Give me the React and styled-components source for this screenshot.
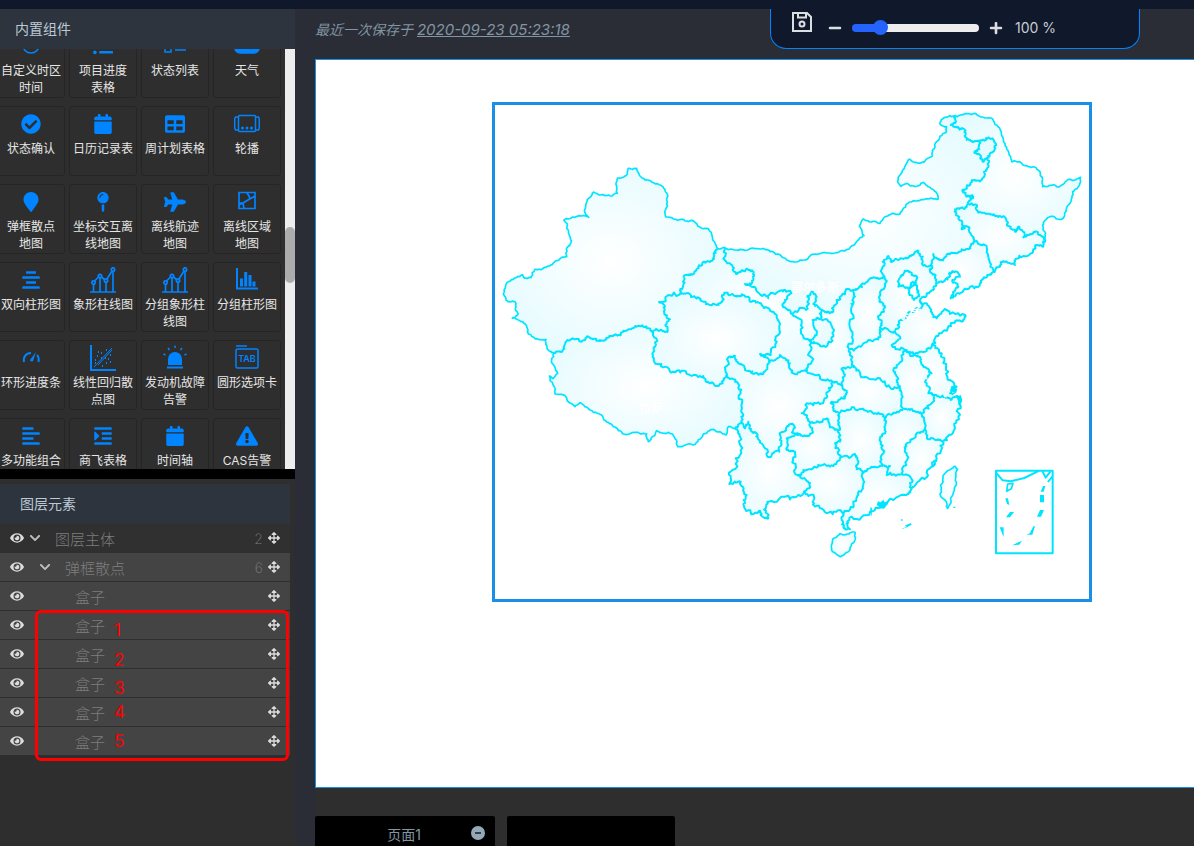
import { useState } from "react";
import styled, { createGlobalStyle, css } from "styled-components";
import {
  FaAlignCenter,
  FaAlignLeft,
  FaArrowsAlt,
  FaCalendar,
  FaCheckCircle,
  FaChevronDown,
  FaExclamationTriangle,
  FaEye,
  FaIndent,
  FaListUl,
  FaMapMarker,
  FaMapPin,
  FaMinus,
  FaPlane,
  FaPlus,
  FaTable,
} from "react-icons/fa";

const GlobalStyle = createGlobalStyle`
  * {
    box-sizing: border-box;
  }
  body {
    margin: 0;
    background: #2a2d35;
    color: #e6e6e6;
    font-family: Inter, "Noto Sans CJK SC", sans-serif;
    font-size: 14px;
  }
  button {
    padding: 0;
    border: none;
    background: none;
    color: inherit;
    font: inherit;
    cursor: pointer;
  }
`;

const Page = styled.div`
  display: flex;
  flex-direction: column;
  height: 100vh;
  overflow: hidden;
`;

const TopStrip = styled.div`
  flex: none;
  height: 9px;
  background: #10182c;
`;

const Body = styled.div`
  display: flex;
  flex: 1;
  min-height: 0;
`;

/* sidebar */

const Sidebar = styled.aside`
  display: flex;
  flex-direction: column;
  flex: none;
  width: 295px;
  background: #2e2e2e;
`;

const PanelTitle = styled.h2`
  flex: none;
  margin: 0;
  padding-left: ${(p) => p.$indent}px;
  height: 40px;
  line-height: 40px;
  background: #2d343e;
  color: #bcc9d4;
  font-size: 14px;
  font-weight: 400;
`;

const ComponentList = styled.div`
  display: flex;
  flex: none;
  justify-content: space-between;
  height: 420px;
  overflow: hidden;
`;

const TileGrid = styled.div`
  display: grid;
  grid-template-columns: repeat(4, 68px);
  grid-auto-rows: 70px;
  gap: 8px 4px;
  margin: -21px 0 0 -3px;
`;

const Tile = styled.button`
  display: flex;
  flex-direction: column;
  align-items: center;
  padding-top: 5px;
  border: 1px solid #252525;
  border-radius: 3px;
  font-size: 12px;
  line-height: 17px;
  white-space: pre-line;
`;

const TileIcon = styled.span`
  display: flex;
  flex: none;
  align-items: center;
  justify-content: center;
  height: 24px;
  margin-bottom: 4px;
  color: #0084ff;
  font-size: ${(p) => p.$size}px;
`;

const ScrollTrack = styled.div`
  flex: none;
  width: 10px;
  padding-top: 178px;
  background: #ededed;
`;

const ScrollThumb = styled.div`
  height: 56px;
  border-radius: 5px;
  background: #acacac;
`;

const Splitter = styled.div`
  flex: none;
  height: 10px;
  background: #000;
`;

const LayerPanel = styled.section`
  position: relative;
  flex: 1;
  padding: 5px 5px 0 0;
`;

const LayerRow = styled.div`
  display: flex;
  align-items: center;
  height: 29px;
  padding: 0 10px;
  border-bottom: 1px solid #2f2f2f;
  background: ${(p) => (p.$depth === 0 ? "#303030" : "#444")};
  color: #7d7d7d;
  font-size: 15px;
  font-weight: 200;
`;

const RowButton = styled.button`
  display: flex;
  flex: none;
  color: #dcdcdc;
  font-size: ${(p) => p.$size}px;
`;

const Toggle = styled.span`
  display: flex;
  flex: none;
  justify-content: flex-end;
  width: ${(p) => 17 + p.$depth * 10}px;
  color: #bdbdbd;
  font-size: 12px;
`;

const LayerName = styled.span`
  flex: 1;
  margin-left: 14px;
`;

const LayerCount = styled.span`
  margin-right: 5px;
  font-size: 14px;
`;

/* red note drawn over the rows */

const Annotation = styled.div`
  position: absolute;
  left: 35px;
  top: 131px;
  width: 254px;
  height: 151px;
  border: 3px solid #f00;
  border-radius: 6px;
  pointer-events: none;
`;

const AnnotationNumber = styled.span`
  position: absolute;
  left: 76px;
  top: ${(p) => p.$top}px;
  color: #f00;
  font-size: 17px;
  line-height: 20px;
`;

/* work area */

const Main = styled.main`
  display: flex;
  flex: 1;
  flex-direction: column;
  min-width: 0;
  padding-left: 20px;
`;

const Toolbar = styled.div`
  display: flex;
  flex: none;
  justify-content: space-between;
  height: 50px;
  padding-right: 54px;
`;

const SavedAt = styled.span`
  color: #8195a3;
  font-style: italic;
  line-height: 42px;
`;

const SavedTime = styled.u`
  font-size: 15px;
`;

const ZoomPanel = styled.div`
  display: flex;
  align-items: center;
  width: 370px;
  height: 40px;
  padding: 0 20px 2px;
  border: 1px solid #0084ff;
  border-top: none;
  border-radius: 0 0 16px 16px;
  background: #10182c;
`;

const ToolButton = styled.button`
  display: flex;
  color: #dcdfe0;
  font-size: 14px;
`;

const SaveButton = styled(ToolButton)`
  align-self: flex-start;
  margin: 2px 15px 0 0;
`;

const track = css`
  height: 8px;
  border-radius: 4px;
  background: linear-gradient(to right, #2563ff 24%, #ededed 24%);
`;

const thumb = css`
  width: 15px;
  height: 15px;
  border: none;
  border-radius: 50%;
  background: #2563ff;
`;

const ZoomSlider = styled.input`
  appearance: none;
  width: 127px;
  height: 16px;
  margin: 0 10px;
  background: none;
  &::-webkit-slider-runnable-track {
    ${track}
  }
  &::-webkit-slider-thumb {
    appearance: none;
    margin-top: -4px;
    ${thumb}
  }
  &::-moz-range-track {
    ${track}
  }
  &::-moz-range-thumb {
    ${thumb}
  }
`;

const ZoomValue = styled.span`
  margin-left: 12px;
  color: #c8ccd0;
`;

const Canvas = styled.div`
  position: relative;
  flex: 1;
  border: 1px solid #1890e8;
  border-right: none;
  background: #fff;
  overflow: hidden;
`;

const SelectedWidget = styled.div`
  position: absolute;
  left: 176px;
  top: 42px;
  width: 600px;
  height: 500px;
  border: 3px solid #1890e8;
  svg {
    display: block;
    width: 100%;
    height: 100%;
  }
`;

const PageTabs = styled.div`
  display: flex;
  flex: none;
  gap: 12px;
  height: 58px;
  padding-top: 28px;
  background: #2e2e2e;
`;

const PageTab = styled.div`
  display: flex;
  align-items: center;
  justify-content: flex-end;
  width: ${(p) => (p.$empty ? 168 : 180)}px;
  padding: 4px 10px 0 0;
  border-radius: 2px 2px 0 0;
  background: #000;
  color: #8195a3;
`;

const TabName = styled.span`
  flex: 1;
  padding: 4px 0 0 22px;
  text-align: center;
  line-height: 26px;
`;

/* icons that the icon font does not have */

const Line = ({ size = 26, children, ...rest }) => (
  <svg
    width={size}
    height={size}
    viewBox="0 0 26 26"
    fill="none"
    stroke="currentColor"
    strokeWidth="1.5"
    {...rest}
  >
    {children}
  </svg>
);

const ClockIcon = () => (
  <Line>
    <circle cx="13" cy="12" r="8" />
    <path d="M13 7v5l4 2" />
  </Line>
);

const StatusListIcon = () => (
  <Line>
    <path d="M3 5h6v5H3zM3 14h6v5H3zM13 7h11M13 17h11" />
  </Line>
);

const WeatherIcon = () => (
  <Line>
    <rect x="1" y="5" width="24" height="15" rx="5" fill="currentColor" />
  </Line>
);

const CarouselIcon = () => (
  <Line>
    <rect x="4.5" y="4.5" width="17" height="16" rx="1" />
    <path d="M4 6H1.500L.7 8v9l.8 2H4M22 6h2.500l.8 2v9l-.8 2H22" />
    <g fill="currentColor" stroke="none">
      <circle cx="8.500" cy="17" r="1.500" />
      <circle cx="13" cy="17" r="1.500" />
      <circle cx="17.500" cy="17" r="1.500" />
    </g>
  </Line>
);

const AreaIcon = () => (
  <Line strokeWidth="1.7">
    <path d="M5 3.500h16v16H5zM5 16l4-2 5-3 7-4M13 4l2 3 1 3M9 14l1 5.500M5 14h4" />
  </Line>
);

const BarLineIcon = () => (
  <Line strokeWidth="1.7">
    <path d="M0 25h26M3.500 25V17M10 25V11M16 25V15M23 25V4M4 14.500l5-5M11 9.500l4 3.500M17 12l5-8" />
    <g fill="#2e2e2e">
      <circle cx="3.500" cy="15.500" r="1.700" />
      <circle cx="10" cy="9" r="1.700" />
      <circle cx="16" cy="13.500" r="1.700" />
      <circle cx="23" cy="2.500" r="1.700" />
    </g>
  </Line>
);

const BarsIcon = () => (
  <Line>
    <path d="M3 1v20.500h21" strokeWidth="2" />
    <path d="M7.500 19.500v-8M11.700 19.500V5M16 19.500V8M20 19.500v-5" strokeWidth="3" />
  </Line>
);

const GaugeIcon = () => (
  <Line>
    <path d="M6 17c-1-5 2-9 7-9M19 10c2 2 2 4 1.500 7" strokeWidth="2" />
    <path d="M18 7l-3 9a2 2 0 0 1-3-1z" fill="currentColor" stroke="none" />
  </Line>
);

const ScatterIcon = () => (
  <Line>
    <path d="M1 0v25h25" strokeWidth="2" />
    <path d="M4 22L22 3M8 20L22 5" strokeWidth="1" />
    <path
      d="M5 15h1M7 11h1M11 8h1M16 5h1M8 7h1M5 18h1M11 13h1M12 21h1M16 18h1M18 14h1M20 10h1M15 13h1M20 17h1"
      strokeWidth="2"
    />
  </Line>
);

const AlarmIcon = () => (
  <Line>
    <path
      d="M6 20v-6a7 7 0 0 1 14 0v6zM5 21.500h16v2H5z"
      fill="currentColor"
      stroke="none"
    />
    <path d="M13 .5V3M6 3l1.500 2M20 3l-1.500 2M1.500 9l2 1M24.500 9l-2 1" />
  </Line>
);

const TabIcon = () => (
  <Line>
    <path d="M2 1h11" />
    <rect x="2" y="4" width="22" height="19" rx="1.500" />
    <text
      x="13"
      y="17"
      fill="currentColor"
      stroke="none"
      fontSize="9"
      fontWeight="600"
      textAnchor="middle"
    >
      TAB
    </text>
  </Line>
);

const SaveIcon = () => (
  <Line size={22} viewBox="0 0 22 22" strokeWidth="2">
    <path d="M2 2h14l4 4v14H2zM7 2v4.500h8V2" />
    <circle cx="11" cy="13" r="2.500" />
  </Line>
);

const RemoveIcon = () => (
  <svg width="14" height="14" viewBox="0 0 14 14">
    <circle cx="7" cy="7" r="7" fill="#94a9b8" />
    <path d="M4 7h6" stroke="#33404a" strokeWidth="2" />
  </svg>
);

const tiles = [
  { name: "自定义时区时间", icon: <ClockIcon /> },
  { name: "项目进度\n表格", icon: <FaListUl /> },
  { name: "状态列表", icon: <StatusListIcon /> },
  { name: "天气", icon: <WeatherIcon /> },
  { name: "状态确认", icon: <FaCheckCircle /> },
  { name: "日历记录表", icon: <FaCalendar /> },
  { name: "周计划表格", icon: <FaTable /> },
  { name: "轮播", icon: <CarouselIcon /> },
  { name: "弹框散点\n地图", icon: <FaMapMarker /> },
  { name: "坐标交互离线地图", icon: <FaMapPin /> },
  { name: "离线航迹\n地图", icon: <FaPlane />, size: 22 },
  { name: "离线区域\n地图", icon: <AreaIcon /> },
  { name: "双向柱形图", icon: <FaAlignCenter /> },
  { name: "象形柱线图", icon: <BarLineIcon /> },
  { name: "分组象形柱线图", icon: <BarLineIcon /> },
  { name: "分组柱形图", icon: <BarsIcon /> },
  { name: "环形进度条", icon: <GaugeIcon /> },
  { name: "线性回归散点图", icon: <ScatterIcon /> },
  { name: "发动机故障告警", icon: <AlarmIcon /> },
  { name: "圆形选项卡", icon: <TabIcon /> },
  { name: "多功能组合", icon: <FaAlignLeft /> },
  { name: "商飞表格", icon: <FaIndent /> },
  { name: "时间轴", icon: <FaCalendar /> },
  { name: "CAS告警", icon: <FaExclamationTriangle />, size: 22 },
];

const layers = [
  { id: 1, name: "图层主体", depth: 0, count: 2 },
  { id: 2, name: "弹框散点", depth: 1, count: 6 },
  { id: 3, name: "盒子", depth: 2 },
  { id: 4, name: "盒子", depth: 2 },
  { id: 5, name: "盒子", depth: 2 },
  { id: 6, name: "盒子", depth: 2 },
  { id: 7, name: "盒子", depth: 2 },
  { id: 8, name: "盒子", depth: 2 },
];

const noteTops = [7, 37, 65, 89, 118];

// borders shared by the provinces
const borders = {
  xjOut: "683,445 668,420 655,386 640,386 600,362 575,358 527,351 524,335 532,320 533,290 520,262 510,255 485,246 465,240 445,218 440,205 415,205 412,222 400,232 382,235 378,250 382,280 362,288 340,284 310,276 303,290 285,338 296,352 275,348 222,360 232,372 235,400 244,425 230,445 230,470 200,482 170,500 155,508 135,508 123,533 103,535 97,524 80,532 55,545 42,570 48,600 75,605 83,645 67,655 88,662 108,675 115,702 145,718 168,718 172,748 192,758",
  xjXz: "192,758 217,755 232,720 275,725 295,710 325,722 345,720 370,708 390,706 400,692 430,684 460,680 490,692",
  xjQh: "490,692 515,690 532,696 530,672 540,658 522,635 518,610 507,606 570,583",
  xjGs: "570,583 580,555 585,525 610,522 625,500 650,485 672,477 676,452 683,445",
  gsOut: "683,445 705,443",
  nmOut: "705,443 750,448 810,447 840,455 875,470 920,486 960,468 1000,458 1045,457 1080,443 1100,425 1122,407 1108,380 1120,357 1145,366 1170,370 1197,345 1230,342 1250,312 1280,303 1310,296 1345,297 1342,282 1320,262 1300,247 1275,260 1255,252 1233,259 1223,243 1240,208 1256,178 1285,190 1305,183 1327,168 1328,150 1350,108 1368,98 1370,80 1350,72 1358,57 1378,48 1392,48",
  hlOut: "1392,48 1430,41 1458,41 1480,52 1505,55 1523,78 1535,105 1545,130 1555,155 1565,185 1595,190 1630,200 1650,215 1658,260 1700,260 1730,242 1772,232 1762,265 1748,275 1740,310 1715,358 1683,349 1660,367 1667,400 1665,418",
  nmHl: "1392,48 1398,65 1382,75 1405,85 1423,88 1430,120 1450,126 1468,122 1496,112 1518,132 1510,155 1492,175 1496,198 1482,215 1475,240 1455,240 1430,262 1417,272 1430,290 1450,290 1436,312",
  hlJl: "1436,312 1458,314 1465,338 1500,342 1518,348 1545,352 1555,378 1575,395 1588,380 1600,412 1620,402 1640,395 1655,408 1665,418",
  nmJl: "1436,312 1420,325 1395,328 1408,350 1415,388 1435,380 1448,410 1455,425",
  jlOut: "1665,418 1660,440 1635,440 1620,462 1580,476 1575,495 1540,483 1530,500 1510,516",
  jlLn: "1455,425 1485,435 1495,470 1510,516",
  lnOut: "1510,516 1490,532 1470,550 1430,568 1405,580 1382,595 1390,575 1405,560 1387,545 1410,530 1400,515 1380,518 1365,540 1342,548",
  lnHe: "1342,548 1335,530 1320,510 1327,498",
  nmLn: "1327,498 1330,462 1348,480 1380,462 1415,448 1440,440 1455,425",
  nmHe: "1327,498 1300,497 1298,470 1285,452 1265,465 1245,475 1225,480 1202,485 1195,468 1178,485 1183,528",
  nmSx: "1183,528 1160,535 1135,540 1105,565 1092,570",
  nmSn: "1092,570 1067,572 1040,600 1030,635 1013,635 993,628",
  nmNx: "993,628 970,612 980,590 965,575 952,590 948,630 907,642",
  nmGs: "907,642 880,622 885,600 902,575 870,572 835,595 805,578 785,560 765,552 790,540 790,515 760,513 738,522 720,490 705,443",
  gsQh: "570,583 590,580 620,595 640,605 680,615 697,605 703,578 735,588 755,583 780,605 815,615 850,635 868,685 855,720 842,765 810,762 838,790",
  qhSc: "838,790 820,822 790,822 765,805 745,790 735,768 715,772 712,822",
  xzQh: "490,692 495,740 492,775 520,802 560,812 600,825 640,828 660,850 680,858 700,842 712,822",
  xzSc: "712,822 735,845 752,880 757,940 757,970",
  xzYn: "757,970 735,985",
  xzOut: "735,985 715,980 708,1005 670,988 640,1002 610,1035 563,1040 548,1002 500,992 475,1025 470,1002 400,1002 370,980 340,955 300,930 270,908 255,920 195,882 178,828 190,835 203,820 185,780 192,758",
  gsNx: "907,642 935,665 940,710 965,728",
  nxGs: "965,728 980,700 968,660 992,655",
  nxSn: "992,655 993,628",
  gsSnA: "992,655 1028,685 1028,722 990,738 965,728",
  gsSnB: "965,728 965,785 950,815",
  gsSc: "838,790 870,765 900,790 910,820 950,815",
  scSn: "950,815 990,830 1028,845",
  snCq: "1028,845 1058,858",
  snHb: "1058,858 1062,830 1055,805 1095,802",
  snHa: "1095,802 1085,775 1078,748",
  snSx: "1078,748 1082,690 1085,620 1095,590 1092,570",
  sxHa: "1078,748 1120,730 1165,718 1172,685",
  sxHe: "1183,528 1190,545 1170,600 1185,622 1175,670 1172,685",
  haHe: "1172,685 1215,692",
  heSd: "1215,692 1235,660 1260,635 1300,612",
  heOut: "1300,612 1290,600 1310,585 1330,570 1342,548",
  sdOut: "1300,612 1320,625 1340,655 1370,630 1425,645 1420,662 1390,668 1355,700 1325,738",
  sdHa: "1215,692 1230,710 1205,735 1245,750",
  sdJs: "1245,750 1270,762 1295,755 1325,738",
  haAh: "1245,750 1235,770 1210,810 1220,840 1230,862",
  haHb: "1095,802 1120,832 1170,835 1190,860 1230,862",
  ahJs: "1245,750 1265,768 1290,770 1300,800 1325,820 1308,840 1315,880 1335,885",
  jsOut: "1325,738 1355,760 1375,815 1400,860 1380,880 1405,890",
  jsZj: "1335,885 1365,890 1382,900 1405,890",
  zjOut: "1405,890 1412,905 1405,950 1390,995 1360,1025",
  ahZj: "1335,885 1330,905 1295,942",
  ahHb: "1230,862 1235,885 1240,928",
  ahJx: "1240,928 1260,930 1275,935 1295,942",
  hbJx: "1240,928 1210,938 1182,952",
  hbHn: "1182,952 1165,938 1130,932 1085,922 1045,940",
  hbCq: "1058,858 1070,875 1065,895 1025,905 1030,930 1045,940",
  scCq: "1028,845 1010,885 990,912 950,910 935,940 960,970",
  cqGz: "960,970 985,965 1010,955 1035,990 1046,990",
  cqHn: "1045,940 1045,965 1046,990",
  gzHn: "1046,990 1050,1025 1035,1030 1050,1075",
  scGz: "960,970 965,1000 935,1008",
  scYn: "935,1008 910,1000 908,972 892,978 870,1020 868,1055 840,1072 815,1030 800,1000 785,995 775,965 765,985 757,970",
  ynGz: "935,1008 890,1015 890,1050 915,1055 912,1090 920,1125",
  gzGx: "920,1125 950,1110 985,1095 1020,1100 1050,1075",
  hnGx: "1050,1075 1095,1062 1105,1085 1100,1108 1122,1118",
  hnGd: "1122,1118 1145,1100 1180,1098",
  hnJx: "1182,952 1185,985 1170,1015 1180,1060 1180,1098",
  jxGd: "1180,1098 1200,1098 1190,1125 1235,1122",
  jxFj: "1235,1122 1250,1065 1250,1030 1280,1000 1305,990",
  jxZj: "1305,990 1295,942",
  fjZj: "1305,990 1315,1018 1345,1018 1360,1025",
  fjOut: "1360,1025 1340,1075 1325,1100 1290,1140 1265,1165",
  fjGd: "1235,1122 1260,1130 1265,1165",
  gdOut: "1265,1165 1250,1185 1190,1210 1140,1235 1085,1250 1072,1265 1080,1288 1062,1285 1055,1260 1062,1240",
  gxGd: "1122,1118 1120,1150 1105,1185 1090,1210 1062,1240",
  gxOut: "1062,1240 1015,1238 975,1220 972,1190 940,1180",
  ynGx: "920,1125 955,1145 958,1165 940,1180",
  ynOut: "940,1180 900,1198 835,1205 828,1220 835,1255 820,1252 810,1232 790,1242 762,1218 770,1185 752,1145 718,1152 722,1115 750,1065 750,1010 735,985",
  bj: "1230,535 1235,525 1255,512 1265,525 1280,530 1272,552 1258,565 1240,558 1225,560 1230,535",
  tj: "1270,545 1285,572 1287,590 1272,600 1258,585 1262,560 1270,545",
  hi: "1050,1300 1070,1303 1095,1297 1095,1320 1080,1350 1052,1370 1028,1355 1028,1320 1050,1300",
  tw: "1395,1098 1403,1108 1395,1160 1382,1195 1372,1225 1365,1200 1350,1182 1352,1155 1370,1115 1395,1098",
  hlIn: "1468,122 1468,148 1454,155 1470,165 1478,185 1492,175",
};

const provinces = [
  "xjOut xjXz xjQh xjGs",
  "xjXz xzQh xzSc xzYn xzOut",
  "xjQh gsQh qhSc xzQh",
  "gsOut nmGs gsNx nxGs gsSnA gsSnB gsSc gsQh xjGs",
  "nmOut nmHl nmJl nmLn nmHe nmSx nmSn nmNx nmGs",
  "hlOut hlJl nmHl",
  "hlJl jlOut jlLn nmJl",
  "jlLn lnOut lnHe nmLn",
  "nmHe sxHe haHe heSd heOut lnHe",
  "nmSx snSx sxHa sxHe",
  "nmSn nxSn gsSnA gsSnB scSn snCq snHb snHa snSx",
  "nmNx gsNx nxGs nxSn",
  "heSd sdOut sdJs sdHa",
  "sxHa haHe sdHa haAh haHb snHa",
  "sdJs jsOut jsZj ahJs",
  "ahJs ahZj ahJx ahHb haAh",
  "jsZj zjOut fjZj jxZj ahZj",
  "haHb ahHb hbJx hbHn hbCq snHb",
  "qhSc xzSc scYn scGz scCq scSn gsSc",
  "snCq hbCq cqHn cqGz scCq",
  "cqGz gzHn gzGx ynGz scGz",
  "hbHn cqHn gzHn hnGx hnGd hnJx",
  "ahJx jxZj jxFj jxGd hnJx hbJx",
  "fjZj fjOut fjGd jxFj",
  "hnGd jxGd fjGd gdOut gxGd",
  "gzGx hnGx gxGd gxOut ynGx",
  "scYn xzYn ynOut ynGx ynGz",
  "bj",
  "tj",
  "hi",
  "tw",
];

// how far each round of splitting may push a point, as a share of the segment
const rough = [0.35, 0.6, 0.9];
const calm = [0.25, 0.35, 0.35];
const calmBorders = ["xjOut", "nmOut", "xzOut", "gsOut", "hlOut", "hi", "tw"];

// splits every segment and pushes the new points sideways, so borders look surveyed
const roughen = (text, seed, pushes) => {
  let n = seed * 97 + 13;
  const random = () => {
    n = (n * 1103515245 + 12345) % 2147483648;
    return n / 2147483648 - 0.5;
  };
  let points = text.split(" ").map((p) => p.split(",").map(Number));
  pushes.forEach((amount) => {
    points = points.flatMap((p, i) => {
      const q = points[i + 1];
      if (!q) return [p];
      const push = random() * amount;
      return [
        p,
        [
          (p[0] + q[0]) / 2 - (q[1] - p[1]) * push,
          (p[1] + q[1]) / 2 + (q[0] - p[0]) * push,
        ],
      ];
    });
  });
  return points.map(([x, y]) => [Math.round(x), Math.round(y)]);
};

const lines = Object.fromEntries(
  Object.entries(borders).map(([key, text], i) => [
    key,
    roughen(text, i + 1, calmBorders.includes(key) ? calm : rough),
  ])
);

const same = (a, b) => a[0] === b[0] && a[1] === b[1];

// joins borders end to end, turning each one round where its far end fits
const outline = (province) => {
  const rest = province.split(" ").map((k) => lines[k]);
  const first = rest.shift();
  const tail = first[first.length - 1];
  const fits =
    !rest.length ||
    rest.some((l) => same(l[0], tail) || same(l[l.length - 1], tail));
  let path = fits ? [...first] : [...first].reverse();
  while (rest.length) {
    const end = path[path.length - 1];
    const i = rest.findIndex(
      (l) => same(l[0], end) || same(l[l.length - 1], end)
    );
    if (i < 0) break;
    const [next] = rest.splice(i, 1);
    path = path.concat(same(next[0], end) ? next : [...next].reverse());
  }
  return path.join(" ");
};

const ChinaMap = () => (
  <svg viewBox="15 15 1782 1482" role="img" aria-label="中国地图">
    <defs>
      <radialGradient id="land" r="0.7">
        <stop offset="0" stopColor="#fff" />
        <stop offset="1" stopColor="#e0faff" />
      </radialGradient>
    </defs>
    <g fill="url(#land)">
      {provinces.map((p) => (
        <polygon key={p} points={outline(p)} />
      ))}
    </g>
    <g fill="none" stroke="#00e5ff" strokeLinejoin="round">
      {Object.entries(lines).map(([key, points]) => (
        <polyline
          key={key}
          points={points.join(" ")}
          strokeWidth={calmBorders.includes(key) ? 5 : 6}
        />
      ))}
      <path
        d="M1518 1112h170v248h-170zM1518 1118l20 23 25 3 40-10 45-22M1658 1115l9 18 14-18M1688 1128l-14 18"
        strokeWidth="6"
      />
      <path d="M1553 1152l16-2-5 16-14 8z" strokeWidth="5" />
    </g>
    <g fill="#00e5ff">
      <path d="M1546 1195l8 0 4 20-7-3zM1548 1252l12-16 12 0-12 16zM1529 1282h12v30zM1567 1336l15-8 14-6-8 12zM1610 1304l10-5 10-20 5 0-8 25zM1641 1250l9-20h12l-9 20zM1650 1185h12v22h-12zM1652 1175l7-17 7 0-5 17z" />
      <path d="M1236 1286l14-6-6-3 18-8 3 5-14 8-16 6zM1233 1258h5v4h-5zM1390 1220h6v4h-6z" />
      <path d="M1160 1214l4-10 8 3 8-8 4 8 8-3 2 8-10 8-14 3zM1140 1235l2-15 4 5-1 25zM1322 1102l8-10 5-10 4 10-8 10zM1400 890l12-5 5 15-8 20zM1380 866l10-8 12 10-4 12-10-3zM1436 290l12-8 4 14-10 4z" />
    </g>
    <g fill="#fff" fontSize="36" fontWeight="700">
      <text x="903" y="576">
        鄂尔多斯
      </text>
      <text x="1222" y="656">
        东营
      </text>
      <text x="448" y="938">
        拉萨
      </text>
      <path d="M1304 832h8v6h-8zM1316 850h10v6h-10zM1300 862h8v6h-8zM1340 876h12v5h-12zM1362 884h8v8h-8zM1328 838h7v7h-7zM1376 862h6v6h-6zM1390 882h7v5h-7z" />
    </g>
  </svg>
);

const App = () => {
  const [zoom, setZoom] = useState(100);

  return (
    <Page>
      <GlobalStyle />
      <TopStrip />
      <Body>
        <Sidebar>
          <PanelTitle $indent={15}>内置组件</PanelTitle>
          <ComponentList>
            <TileGrid>
              {tiles.map((tile) => (
                <Tile key={tile.name} type="button">
                  <TileIcon $size={tile.size || 20}>{tile.icon}</TileIcon>
                  {tile.name}
                </Tile>
              ))}
            </TileGrid>
            <ScrollTrack>
              <ScrollThumb />
            </ScrollTrack>
          </ComponentList>
          <Splitter />
          <LayerPanel>
            <PanelTitle $indent={20}>图层元素</PanelTitle>
            {layers.map((layer) => (
              <LayerRow key={layer.id} $depth={layer.depth}>
                <RowButton type="button" aria-label="显示" $size={14}>
                  <FaEye />
                </RowButton>
                <Toggle $depth={layer.depth}>
                  {layer.count && <FaChevronDown />}
                </Toggle>
                <LayerName>{layer.name}</LayerName>
                {layer.count && <LayerCount>{layer.count}</LayerCount>}
                <RowButton type="button" aria-label="移动" $size={12}>
                  <FaArrowsAlt />
                </RowButton>
              </LayerRow>
            ))}
            <Annotation>
              {noteTops.map((top, i) => (
                <AnnotationNumber key={top} $top={top}>
                  {i + 1}
                </AnnotationNumber>
              ))}
            </Annotation>
          </LayerPanel>
        </Sidebar>
        <Main>
          <Toolbar>
            <SavedAt>
              最近一次保存于 <SavedTime>2020-09-23 05:23:18</SavedTime>
            </SavedAt>
            <ZoomPanel>
              <SaveButton type="button" aria-label="保存">
                <SaveIcon />
              </SaveButton>
              <ToolButton
                type="button"
                aria-label="缩小"
                onClick={() => setZoom(Math.max(0, zoom - 10))}
              >
                <FaMinus />
              </ToolButton>
              <ZoomSlider
                type="range"
                aria-label="缩放"
                min="10"
                max="500"
                value={zoom}
                onChange={(e) => setZoom(Number(e.target.value))}
              />
              <ToolButton
                type="button"
                aria-label="放大"
                onClick={() => setZoom(zoom + 10)}
              >
                <FaPlus />
              </ToolButton>
              <ZoomValue>{zoom} %</ZoomValue>
            </ZoomPanel>
          </Toolbar>
          <Canvas>
            <SelectedWidget>
              <ChinaMap />
            </SelectedWidget>
          </Canvas>
          <PageTabs>
            <PageTab>
              <TabName>页面1</TabName>
              <ToolButton type="button" aria-label="删除页面">
                <RemoveIcon />
              </ToolButton>
            </PageTab>
            <PageTab $empty />
          </PageTabs>
        </Main>
      </Body>
    </Page>
  );
};

export default App;
